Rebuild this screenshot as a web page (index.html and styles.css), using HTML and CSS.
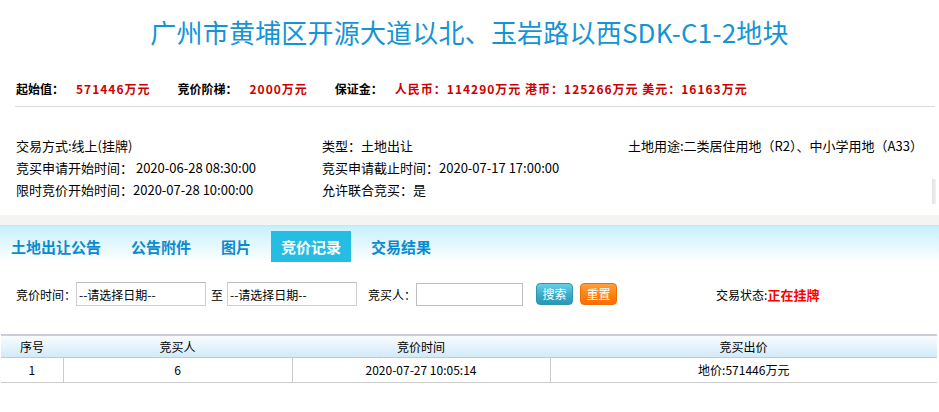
FILE: index.html
```html
<!DOCTYPE html>
<html lang="zh-CN">
<head>
<meta charset="utf-8">
<title>竞价记录</title>
<link rel="stylesheet" href="styles.css">
</head>
<body>
<div class="page">
  <h1 class="title">广州市黄埔区开源大道以北、玉岩路以西SDK-C1-2地块</h1>

  <div class="prices">
    <span class="lbl">起始值：</span><span class="val">571446万元</span>
    <span class="lbl">竞价阶梯：</span><span class="val">2000万元</span>
    <span class="lbl">保证金：</span><span class="val">人民币：114290万元 港币：125266万元 美元：16163万元</span>
  </div>

  <div class="info">
    <div class="info-grid">
      <div>交易方式:线上(挂牌)</div>
      <div>类型：土地出让</div>
      <div>土地用途:二类居住用地（R2）、中小学用地（A33）</div>
      <div>竞买申请开始时间： 2020-06-28 08:30:00</div>
      <div>竞买申请截止时间：2020-07-17 17:00:00</div>
      <div></div>
      <div>限时竞价开始时间：2020-07-28 10:00:00</div>
      <div>允许联合竞买：是</div>
      <div></div>
    </div>
    <span class="scroll-stub"></span>
  </div>

  <div class="band"></div>

  <div class="tabs">
    <span class="tab">土地出让公告</span>
    <span class="tab">公告附件</span>
    <span class="tab">图片</span>
    <span class="tab active">竞价记录</span>
    <span class="tab">交易结果</span>
  </div>

  <div class="search">
    <span class="s-label">竞价时间：</span>
    <input class="field date" type="text" value="--请选择日期--" readonly>
    <span class="s-to">至</span>
    <input class="field date" type="text" value="--请选择日期--" readonly>
    <span class="s-label buyer">竞买人：</span>
    <input class="field name" type="text">
    <button class="btn btn-blue">搜索</button>
    <button class="btn btn-orange">重置</button>
    <span class="status">交易状态:<b>正在挂牌</b></span>
  </div>

  <table class="records">
    <thead>
      <tr>
        <th class="c1">序号</th>
        <th class="c2">竞买人</th>
        <th class="c3">竞价时间</th>
        <th class="c4">竞买出价</th>
      </tr>
    </thead>
    <tbody>
      <tr>
        <td>1</td>
        <td>6</td>
        <td>2020-07-27 10:05:14</td>
        <td>地价:571446万元</td>
      </tr>
    </tbody>
  </table>
</div>
</body>
</html>
```

FILE: styles.css
```css
* { box-sizing: border-box; }

html, body {
  margin: 0;
  padding: 0;
  background: #fff;
}

body {
  font-family: "Noto Sans CJK SC", "Liberation Sans", sans-serif;
  font-size: 12px;
  color: #000;
  width: 939px;
  overflow: hidden;
}

.page {
  width: 939px;
}

.title {
  margin: 0;
  height: 64px;
  line-height: 64px;
  text-align: center;
  font-size: 26px;
  font-weight: normal;
  color: #1594d4;
  white-space: nowrap;
  letter-spacing: 0.2px;
}

.prices {
  display: flex;
  margin: 0 4px 0 15px;
  padding: 15px 0 7px 1px;
  line-height: 20px;
  font-size: 12px;
  font-weight: bold;
  border-bottom: 1px solid #dcdcdc;
  white-space: nowrap;
}

.prices .lbl {
  color: #000;
}

.prices .val {
  color: #cc0000;
  letter-spacing: 1px;
  margin: 0 27px 0 12px;
}

.info {
  position: relative;
  padding: 28px 0 14px 16px;
  font-size: 13px;
}

.info-grid {
  display: grid;
  grid-template-columns: 306px 306px 1fr;
  grid-auto-rows: 22px;
  line-height: 22px;
  white-space: nowrap;
}

.scroll-stub {
  position: absolute;
  left: 932px;
  top: 72px;
  width: 4px;
  height: 25px;
  background: linear-gradient(to right, #e2e2e2, #f2f2f2);
}

.band {
  height: 10px;
  background: #f4f5f2;
}

.tabs {
  display: flex;
  height: 37px;
  padding: 6px 0 0 1px;
  background: linear-gradient(to bottom, #b6e9f6 0px, #c8f1fb 2px, #e6f9fd 22px, #ffffff 37px);
}

.tab {
  height: 31px;
  line-height: 31px;
  padding: 0 10px;
  margin-right: 10px;
  font-size: 15px;
  font-weight: bold;
  color: #0b8bcf;
  white-space: nowrap;
}

.tab.active {
  background: #25bde1;
  color: #fff;
}

.search {
  display: flex;
  align-items: center;
  height: 24px;
  margin-top: 20px;
  padding-left: 16px;
  white-space: nowrap;
}

.s-label {
  font-size: 12px;
}

.s-label.buyer {
  margin-left: 11px;
}

.s-to {
  margin: 0 4px 0 5px;
}

.field {
  height: 24px;
  padding: 0 2px;
  border: 1px solid #cfcfcf;
  border-top-color: #bdbdbd;
  font-family: inherit;
  font-size: 12px;
  color: #000;
  background: #fff;
  outline: none;
}

.field.date {
  width: 130px;
}

.field.name {
  width: 107px;
  height: 23px;
  border-color: #bfbfbf;
}

.btn {
  width: 37px;
  height: 22px;
  padding: 0;
  border-radius: 4px;
  font-family: inherit;
  font-size: 12px;
  color: #fff;
  line-height: 20px;
  cursor: pointer;
}

.btn-blue {
  margin-left: 13px;
  border: 1px solid #2f94ae;
  background: linear-gradient(to bottom, #66d0ea, #3aabc9 55%, #2b97b6);
}

.btn-orange {
  margin-left: 7px;
  border: 1px solid #ec6f06;
  background: linear-gradient(to bottom, #ffa03a, #ff800f 55%, #ff6d00);
}

.status {
  margin-left: 99px;
  font-size: 12px;
}

.status b {
  color: #ff0000;
  font-size: 13px;
  font-weight: bold;
}

.records {
  margin: 28px 0 0 1px;
  width: 936px;
  border-collapse: collapse;
  table-layout: fixed;
  font-size: 12px;
}

.records thead tr {
  background: linear-gradient(to bottom, #fbfdff, #d2eaf8);
}

.records th {
  height: 22px;
  padding: 0;
  font-weight: normal;
  text-align: center;
  border-top: 2px solid #c9cdd5;
  border-bottom: 1px solid #c8c8c8;
}

.records td {
  height: 25px;
  padding: 0;
  text-align: center;
  border-bottom: 1px solid #cccccc;
  border-left: 1px solid #cccccc;
}

.records td:first-child {
  border-left: none;
}

.records .c1 { width: 62px; }
.records .c2 { width: 229px; }
.records .c3 { width: 258px; }
.records .c4 { width: auto; }
```
